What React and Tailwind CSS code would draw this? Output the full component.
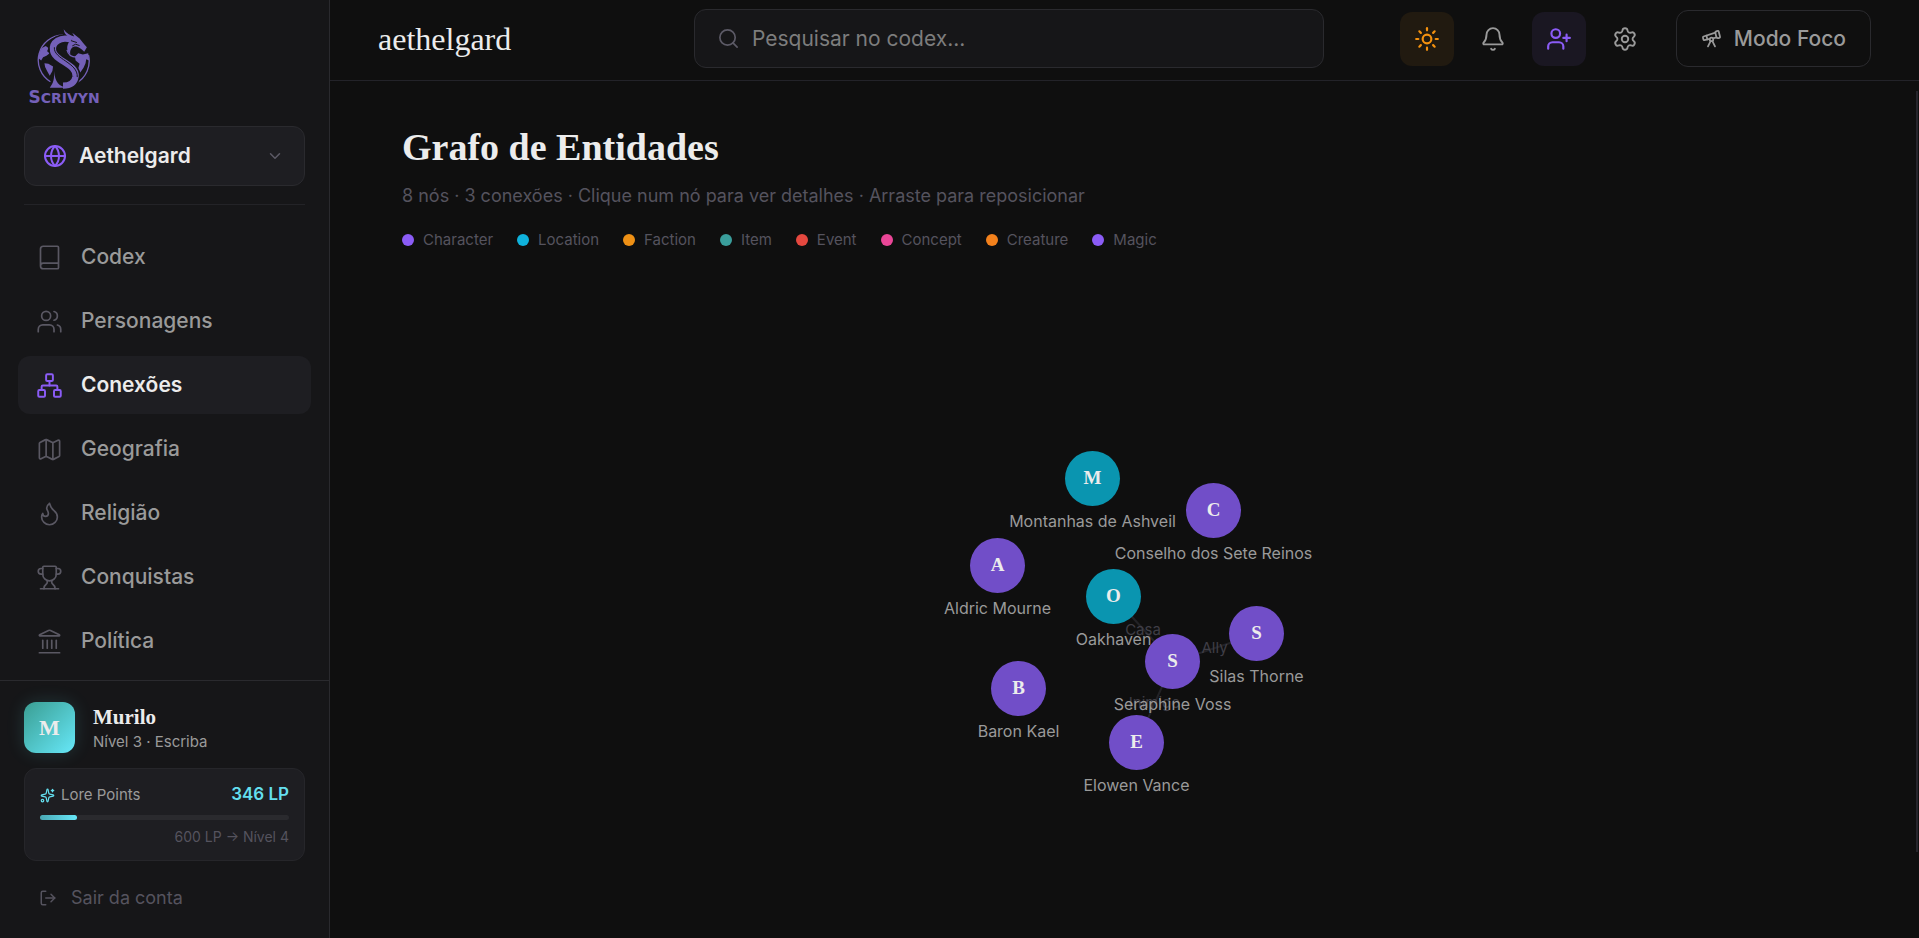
import React from "react";
import {
  Book, Users, Network, Map as MapIcon, Flame, Trophy, Landmark, Globe, ChevronDown,
  Sparkles, LogOut, Search, Sun, Bell, UserPlus, Settings, Telescope,
} from "lucide-react";

const NAV = [
  { label: "Codex", icon: Book },
  { label: "Personagens", icon: Users },
  { label: "Conexões", icon: Network, active: true },
  { label: "Geografia", icon: MapIcon },
  { label: "Religião", icon: Flame },
  { label: "Conquistas", icon: Trophy },
  { label: "Política", icon: Landmark },
];

const LEGEND = [
  { label: "Character", dot: "bg-[#8b5cf6]" },
  { label: "Location", dot: "bg-[#0fb2dc]" },
  { label: "Faction", dot: "bg-[#ee9015]" },
  { label: "Item", dot: "bg-[#3a9e9b]" },
  { label: "Event", dot: "bg-[#e5483f]" },
  { label: "Concept", dot: "bg-[#ea4697]" },
  { label: "Creature", dot: "bg-[#f3811c]" },
  { label: "Magic", dot: "bg-[#8b5cf6]" },
];

const NODES = [
  { id: "ashveil", letter: "M", label: "Montanhas de Ashveil", x: -32, y: -120, place: true },
  { id: "conselho", letter: "C", label: "Conselho dos Sete Reinos", x: 89, y: -88 },
  { id: "aldric", letter: "A", label: "Aldric Mourne", x: -127, y: -33 },
  { id: "oakhaven", letter: "O", label: "Oakhaven", x: -11, y: -2, place: true },
  { id: "silas", letter: "S", label: "Silas Thorne", x: 132, y: 35 },
  { id: "voss", letter: "S", label: "Seraphine Voss", x: 48, y: 63 },
  { id: "baron", letter: "B", label: "Baron Kael", x: -106, y: 90 },
  { id: "elowen", letter: "E", label: "Elowen Vance", x: 12, y: 144 },
];

const EDGES = [
  { from: "voss", to: "oakhaven", label: "Casa" },
  { from: "voss", to: "silas", label: "Ally" },
  { from: "voss", to: "elowen", label: "Inimigo" },
];

const byId = Object.fromEntries(NODES.map((n) => [n.id, n]));

function Logo() {
  const band = "M104 36C70 24 44 44 48 68C52 100 120 108 116 146C113 166 98 174 78 174";
  return (
    <div className="flex w-20 flex-col items-center text-[#7460b8]">
      <svg viewBox="0 0 162 184" className="h-[61px] w-[54px]" fill="none" aria-hidden="true">
        <path d="M78 21A76 76 0 0 0 40 162M155 82A76 76 0 0 1 118 166" stroke="currentColor" strokeWidth="4" />
        <path d="M6 76L14 60L26 54L34 60L30 70L38 76L28 84L18 88L12 98L5 92ZM22 106L34 108L48 116L46 130L38 144L30 130L24 118Z" fill="currentColor" />
        <path d="M114 86L124 76L138 80L154 76L157 98L148 94L146 106L140 120L130 134L124 122L128 108L116 98Z" fill="currentColor" />
        <path d={band} stroke="#161618" strokeWidth="28" />
        <path d={band} stroke="currentColor" strokeWidth="19" />
        <path d="M52 58C48 94 124 104 121 148" stroke="#161618" strokeWidth="3" />
        <path d="M51 130C52 152 50 166 38 180H92C66 178 54 164 51 130Z" fill="currentColor" />
        <path d="M80 4C82 22 94 26 106 32L94 46C88 58 90 70 100 80C98 66 104 58 114 56C126 56 134 64 142 72L150 58C142 50 134 40 128 32L106 14L112 26C100 22 88 16 80 4Z" fill="currentColor" />
        <path d="M102 38L120 44M106 54L116 49L128 53" stroke="#161618" strokeWidth="3" />
        <path d="M90 66C94 82 106 88 118 88" stroke="currentColor" strokeWidth="4" />
      </svg>
      <span className="font-['DejaVu_Sans'] text-sm leading-4 font-bold uppercase">
        <span className="text-[17px]">S</span>crivyn
      </span>
    </div>
  );
}

function Sidebar() {
  return (
    <aside className="flex w-[330px] shrink-0 flex-col border-r border-[#2a2a2e] bg-[#161618]">
      <div className="px-6 pt-7">
        <Logo />
        <button type="button" className="mt-5 flex h-[60px] w-full items-center gap-3 rounded-xl border border-[#2a2a2e] bg-[#1e1e22] px-[18px] text-left">
          <Globe size={24} className="text-[#8b5cf6]" />
          <span className="flex-1 text-[21px] font-semibold text-[#ececec]">Aethelgard</span>
          <ChevronDown size={18} className="mr-0.5 text-[#5c5a66]" />
        </button>
        <hr className="mt-[18px] border-[#232327]" />
      </div>
      <nav className="flex min-h-0 flex-1 flex-col gap-1.5 overflow-hidden px-[18px] pt-[23px]">
        {NAV.map(({ label, icon: Icon, active }) => (
          <a
            key={label}
            href="#"
            aria-current={active ? "page" : undefined}
            className={
              active
                ? "flex h-[58px] shrink-0 items-center gap-[18px] rounded-xl bg-[#1e1e22] px-[18px] text-[21px] font-semibold text-[#ececec]"
                : "flex h-[58px] shrink-0 items-center gap-[18px] rounded-xl px-[18px] text-[21px] font-medium text-[#9a9a9a]"
            }
          >
            <Icon size={27} strokeWidth={active ? 1.75 : 1.5} className={active ? "text-[#8b5cf6]" : "text-[#5a5863]"} />
            {label}
          </a>
        ))}
      </nav>
      <div className="border-t border-[#2a2a2e] px-6 pt-[21px] pb-[15px]">
        <div className="flex items-center gap-[18px]">
          <div className="flex size-[51px] items-center justify-center rounded-xl bg-linear-to-br from-[#3a9e93] to-[#67e8f9] font-['Liberation_Serif'] text-[22px] font-bold text-[#ececec] shadow-[0_0_18px_rgba(103,232,249,0.15)]">
            M
          </div>
          <div>
            <div className="font-['Liberation_Serif'] text-[21px] leading-7 font-bold text-[#ececec]">Murilo</div>
            <div className="text-[15px] leading-[22px] text-[#9a9a9a]">Nível 3 · Escriba</div>
          </div>
        </div>
        <div className="mt-[15px] rounded-xl border border-[#26262a] bg-[#1e1e22] px-[15px] py-[14px]">
          <div className="flex h-6 items-center gap-1.5 text-[#64dfee]">
            <Sparkles size={15} />
            <span className="flex-1 text-[15px] text-[#9a9a9a]">Lore Points</span>
            <span className="text-[17px] font-semibold">346 LP</span>
          </div>
          <div className="mt-2 h-[5px] rounded-full bg-[#2a2a2e]">
            <div className="h-full w-[15%] rounded-full bg-linear-to-r from-[#4aa9b5] to-[#67e8f9]" />
          </div>
          <div className="mt-2 text-right text-sm leading-[18px] text-[#55535e]">600 LP → Nível 4</div>
        </div>
        <button type="button" className="mt-3 flex h-[50px] w-full items-center gap-[14px] px-[15px] text-lg text-[#55535e]">
          <LogOut size={18} />
          Sair da conta
        </button>
      </div>
    </aside>
  );
}

function Header() {
  return (
    <header className="flex h-[81px] shrink-0 items-center justify-between border-b border-[#232329] px-12 pb-[3px]">
      <div className="w-60 font-['Liberation_Serif'] text-[32px] leading-10 text-[#ececec]">aethelgard</div>
      <label className="flex h-[59px] w-[630px] items-center gap-3 rounded-xl border border-[#2a2a2e] bg-[#161618] px-[22px]">
        <Search size={23} strokeWidth={1.75} className="text-[#5c5a66]" />
        <input
          type="search"
          aria-label="Pesquisar no codex"
          placeholder="Pesquisar no codex..."
          className="min-w-0 flex-1 bg-transparent text-[21px] text-[#ececec] outline-none placeholder:text-[#7d7d7d]"
        />
      </label>
      <div className="flex items-center gap-3">
        <button type="button" aria-label="Tema" className="flex size-[54px] items-center justify-center rounded-xl bg-[#211a10] text-[#f5920f]">
          <Sun size={26} />
        </button>
        <button type="button" aria-label="Notificações" className="flex size-[54px] items-center justify-center rounded-xl text-[#9a9a9a]">
          <Bell size={26} strokeWidth={1.75} />
        </button>
        <button type="button" aria-label="Convidar" className="flex size-[54px] items-center justify-center rounded-xl bg-[#1a1722] text-[#8b5cf6]">
          <UserPlus size={26} />
        </button>
        <button type="button" aria-label="Configurações" className="flex size-[54px] items-center justify-center rounded-xl text-[#9a9a9a]">
          <Settings size={26} strokeWidth={1.75} />
        </button>
        <button type="button" className="ml-3 flex h-[57px] items-center gap-3 rounded-xl border border-[#2a2a2e] px-6 text-[21px] font-medium text-[#9a9a9a]">
          <Telescope size={21} />
          Modo Foco
        </button>
      </div>
    </header>
  );
}

function Graph() {
  return (
    <div className="flex flex-1 items-center justify-center pt-2">
      <div className="relative size-0">
        <svg className="absolute overflow-visible" width="1" height="1" aria-hidden="true">
          {EDGES.map(({ from, to }) => (
            <line key={to} x1={byId[from].x} y1={byId[from].y} x2={byId[to].x} y2={byId[to].y} stroke="#222226" strokeWidth="2" />
          ))}
        </svg>
        {EDGES.map(({ from, to, label }) => (
          <span
            key={label}
            className="absolute -translate-x-1/2 -translate-y-1/2 text-[15px] leading-5 whitespace-nowrap text-[#3f3e46]"
            style={{ left: (byId[from].x + byId[to].x) / 2, top: (byId[from].y + byId[to].y) / 2 }}
          >
            {label}
          </span>
        ))}
        {NODES.map(({ id, letter, label, x, y, place }) => (
          <button
            type="button"
            key={id}
            className="absolute flex w-14 -translate-x-1/2 flex-col items-center gap-[5px]"
            style={{ left: x, top: y - 28 }}
          >
            <span
              className={
                place
                  ? "flex size-[55px] shrink-0 items-center justify-center rounded-full bg-[#0a95b0] font-['Liberation_Serif'] text-[19px] font-bold text-[#ececec]"
                  : "flex size-[55px] shrink-0 items-center justify-center rounded-full bg-[#714ec8] font-['Liberation_Serif'] text-[19px] font-bold text-[#ececec]"
              }
            >
              {letter}
            </span>
            <span className="text-base leading-5 whitespace-nowrap text-[#9a9a9a]">{label}</span>
          </button>
        ))}
      </div>
    </div>
  );
}

export default function App() {
  return (
    <div className="flex h-screen bg-[#0f0f0f] font-[Inter,sans-serif]">
      <Sidebar />
      <div className="flex min-w-0 flex-1 flex-col">
        <Header />
        <main className="relative flex min-h-0 flex-1 flex-col px-[72px] pt-10">
          <h1 className="font-['Liberation_Serif'] text-[38px] leading-[52px] font-bold text-[#ececec]">Grafo de Entidades</h1>
          <p className="mt-[9px] text-lg leading-7 text-[#55535e]">
            8 nós · 3 conexões · Clique num nó para ver detalhes · Arraste para reposicionar
          </p>
          <ul className="mt-[18px] flex flex-wrap gap-6">
            {LEGEND.map(({ label, dot }) => (
              <li key={label} className="flex items-center gap-[9px] text-[15px] leading-6 text-[#55535e]">
                <span className={"size-3 rounded-full " + dot} />
                {label}
              </li>
            ))}
          </ul>
          <Graph />
          <div className="absolute top-2.5 right-px bottom-[10%] w-0.5 bg-[#26252c]" aria-hidden="true" />
        </main>
      </div>
    </div>
  );
}
